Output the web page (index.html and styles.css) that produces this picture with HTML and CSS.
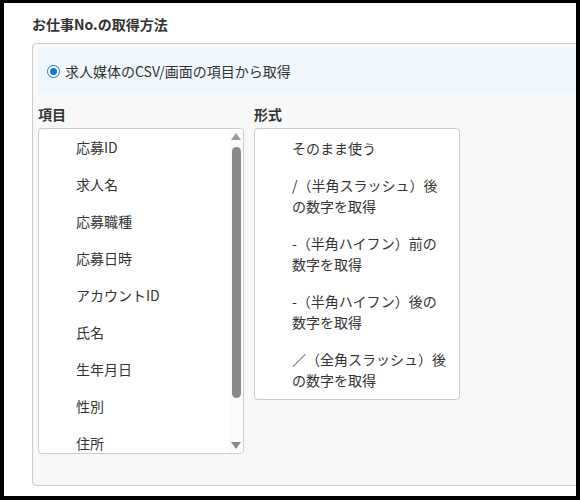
FILE: index.html
```html
<!DOCTYPE html>
<html lang="ja">
<head>
<meta charset="utf-8">
<title>お仕事No.の取得方法</title>
<link rel="stylesheet" href="styles.css">
</head>
<body>
<div class="frame">
  <h2 class="title">お仕事No.の取得方法</h2>
  <div class="panel">
    <label class="option-band">
      <span class="radio"><span class="radio-dot"></span></span>
      <span class="option-text">求人媒体のCSV/画面の項目から取得</span>
    </label>
    <div class="columns">
      <div class="col">
        <div class="col-label">項目</div>
        <div class="listbox">
          <ul class="items">
            <li>応募ID</li>
            <li>求人名</li>
            <li>応募職種</li>
            <li>応募日時</li>
            <li>アカウントID</li>
            <li>氏名</li>
            <li>生年月日</li>
            <li>性別</li>
            <li>住所</li>
          </ul>
          <div class="scrollbar">
            <div class="sb-btn"><span class="arrow-up"></span></div>
            <div class="sb-track"><div class="sb-thumb"></div></div>
            <div class="sb-btn"><span class="arrow-down"></span></div>
          </div>
        </div>
      </div>
      <div class="col">
        <div class="col-label">形式</div>
        <div class="listbox formats">
          <ul class="items format-items">
            <li>そのまま使う</li>
            <li>/（半角スラッシュ）後の数字を取得</li>
            <li>-（半角ハイフン）前の数字を取得</li>
            <li>-（半角ハイフン）後の数字を取得</li>
            <li>／（全角スラッシュ）後の数字を取得</li>
          </ul>
        </div>
      </div>
    </div>
  </div>
</div>
</body>
</html>
```

FILE: styles.css
```css
html, body {
  margin: 0;
  padding: 0;
  background: #000;
}

body {
  font-family: "Noto Sans CJK JP", "Noto Sans", sans-serif;
  font-size: 14px;
  color: #333;
}

.frame {
  margin: 3px 4px 0 4px;
  width: 572px;
  height: 493px;
  background: #fff;
  overflow: hidden;
  box-sizing: border-box;
  padding: 11px 0 0 28px;
}

.title {
  margin: 0 0 9px 0;
  font-size: 14px;
  line-height: 20px;
  font-weight: bold;
  color: #333;
}

.panel {
  width: 600px;
  border: 1px solid #ccc;
  border-radius: 4px;
  background: #f8f8f8;
  padding: 5px 0 31px 4px;
}

.option-band {
  display: flex;
  align-items: center;
  height: 44px;
  background: #f0f7fd;
  padding-left: 10px;
}

.radio {
  width: 13px;
  height: 13px;
  box-sizing: border-box;
  border: 1.5px solid #1a74d6;
  border-radius: 50%;
  background: #fff;
  display: flex;
  align-items: center;
  justify-content: center;
  margin-right: 5px;
}

.radio-dot {
  width: 7px;
  height: 7px;
  border-radius: 50%;
  background: #1a74d6;
}

.option-text {
  line-height: 20px;
}

.columns {
  display: flex;
  gap: 10px;
  margin-top: 11px;
  padding-left: 1px;
}

.col {
  width: 206px;
}

.col-label {
  font-weight: bold;
  line-height: 20px;
  margin-bottom: 4px;
}

.listbox {
  display: flex;
  border: 1px solid #ccc;
  border-radius: 4px;
  background: #fff;
  height: 326px;
  box-sizing: border-box;
  overflow: hidden;
}

.formats {
  height: auto;
}

.items {
  list-style: none;
  margin: 0;
  padding: 0;
  flex: 1;
  overflow: hidden;
}

.items li {
  padding: 8px 4px 8px 37px;
  line-height: 21px;
}

.format-items li {
  padding: 8.5px 12px 8.5px 37px;
  line-height: 20.5px;
}

.scrollbar {
  width: 14px;
  display: flex;
  flex-direction: column;
  background: #fbfbfb;
}

.sb-btn {
  height: 15px;
  display: flex;
  align-items: center;
  justify-content: center;
}

.arrow-up {
  width: 0;
  height: 0;
  border-left: 5px solid transparent;
  border-right: 5px solid transparent;
  border-bottom: 7px solid #9a9a9a;
}

.arrow-down {
  width: 0;
  height: 0;
  border-left: 5px solid transparent;
  border-right: 5px solid transparent;
  border-top: 7px solid #8a8a8a;
}

.sb-track {
  flex: 1;
  padding-top: 3px;
}

.sb-thumb {
  width: 9px;
  height: 251px;
  margin: 0 auto;
  background: #8a8a8a;
  border-radius: 5px;
}
```
